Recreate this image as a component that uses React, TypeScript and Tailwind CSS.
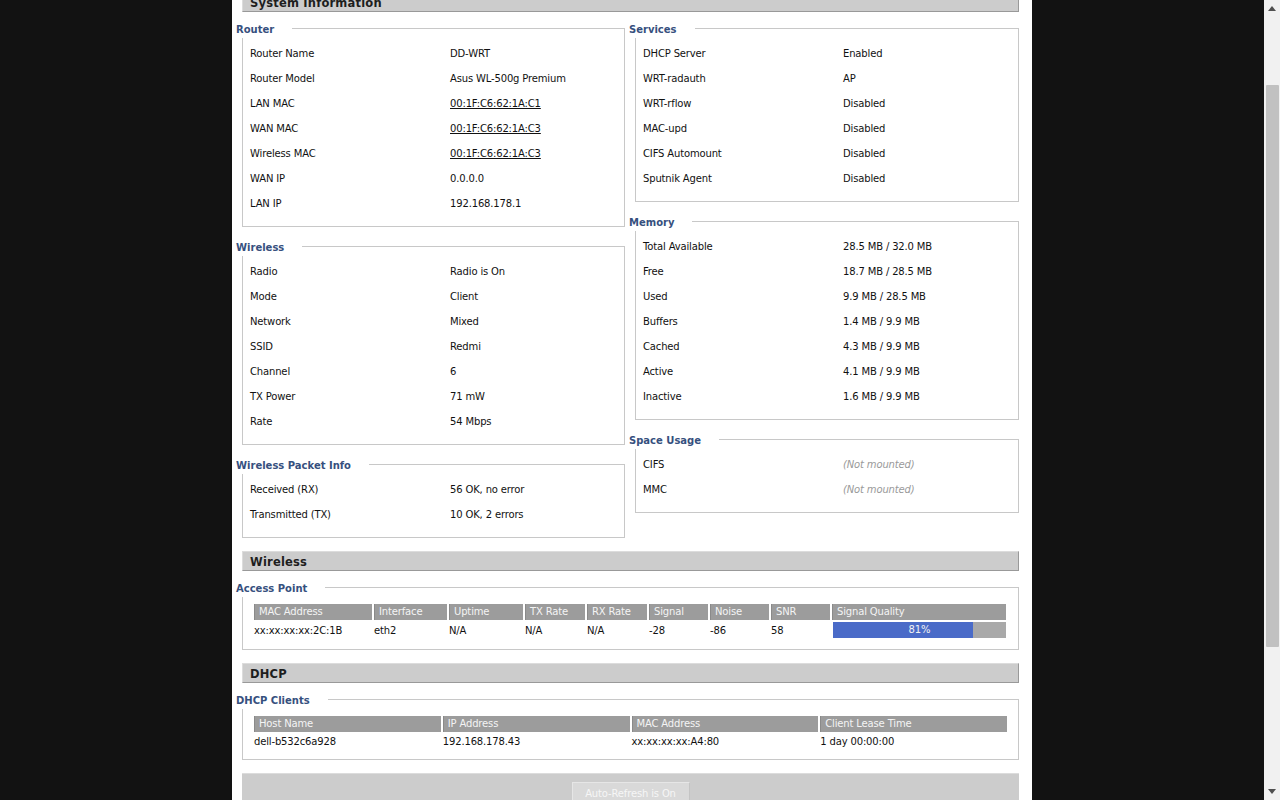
import React from "react";

type Row = [string, React.ReactNode];

function Legend({ children }: { children: React.ReactNode }) {
  return (
    <span className="absolute left-[-7px] top-[-7px] bg-white pr-[18px] text-[10px] font-bold leading-[16px] tracking-[0px] text-[#36507e]">
      {children}
    </span>
  );
}

function Box({
  legend,
  rows,
  className,
}: {
  legend: string;
  rows: Row[];
  className?: string;
}) {
  return (
    <div className={`relative border border-[#c8c8c8] pt-[12px] pb-[10px] ${className ?? ""}`}>
      <Legend>{legend}</Legend>
      {rows.map(([label, value], i) => (
        <div key={i} className="flex h-[25px] items-center pl-[7px]">
          <div className="w-[200px] shrink-0">{label}</div>
          <div>{value}</div>
        </div>
      ))}
    </div>
  );
}

function SectionBar({ title, className }: { title: string; className?: string }) {
  return (
    <div
      className={`flex h-[20px] items-center border-t border-l border-t-[#dcdcdc] border-l-[#dcdcdc] border-b border-r border-b-[#999] border-r-[#999] bg-[#cccccc] pl-[7px] pt-[3px] font-['DejaVu_Sans',sans-serif] text-[11.5px] font-bold tracking-[0.2px] text-[#1e1e1e] ${className ?? ""}`}
    >
      {title}
    </div>
  );
}

const mac = (s: string) => <span className="underline">{s}</span>;
const nm = <span className="italic text-[#9a9a9a]">(Not mounted)</span>;

function HeadCell({ children }: { children: React.ReactNode }) {
  return (
    <div className="h-[16px] overflow-hidden whitespace-nowrap border-l border-[#8a8a8a] bg-[#9c9c9c] pl-[4px] leading-[16px] text-[#f4f4f4]">
      {children}
    </div>
  );
}

function DataCell({ children }: { children: React.ReactNode }) {
  return <div className="h-[16px] whitespace-nowrap pt-[1px] leading-[16px]">{children}</div>;
}

export default function App() {
  const quality = 81;
  return (
    <div className="flex h-[800px] w-[1280px] overflow-hidden bg-[#121212] font-['DejaVu_Sans',sans-serif] text-[10px] tracking-[-0.15px] text-[#111]">
      <div className="flex h-[800px] flex-1 justify-center overflow-hidden">
        <div className="mt-[-8px] min-h-[840px] w-[800px] shrink-0 bg-white pl-[10px] pr-[13px]">
          <SectionBar title="System Information" />
          <div className="mt-[16px] flex gap-[10px]">
            <div className="flex w-[383px] flex-col gap-[19px]">
              <Box
                legend="Router"
                rows={[
                  ["Router Name", "DD-WRT"],
                  ["Router Model", "Asus WL-500g Premium"],
                  ["LAN MAC", mac("00:1F:C6:62:1A:C1")],
                  ["WAN MAC", mac("00:1F:C6:62:1A:C3")],
                  ["Wireless MAC", mac("00:1F:C6:62:1A:C3")],
                  ["WAN IP", "0.0.0.0"],
                  ["LAN IP", "192.168.178.1"],
                ]}
              />
              <Box
                legend="Wireless"
                rows={[
                  ["Radio", "Radio is On"],
                  ["Mode", "Client"],
                  ["Network", "Mixed"],
                  ["SSID", "Redmi"],
                  ["Channel", "6"],
                  ["TX Power", "71 mW"],
                  ["Rate", "54 Mbps"],
                ]}
              />
              <Box
                legend="Wireless Packet Info"
                rows={[
                  ["Received (RX)", "56 OK, no error"],
                  ["Transmitted (TX)", "10 OK, 2 errors"],
                ]}
              />
            </div>
            <div className="flex w-[384px] flex-col gap-[19px]">
              <Box
                legend="Services"
                rows={[
                  ["DHCP Server", "Enabled"],
                  ["WRT-radauth", "AP"],
                  ["WRT-rflow", "Disabled"],
                  ["MAC-upd", "Disabled"],
                  ["CIFS Automount", "Disabled"],
                  ["Sputnik Agent", "Disabled"],
                ]}
              />
              <Box
                legend="Memory"
                rows={[
                  ["Total Available", "28.5 MB / 32.0 MB"],
                  ["Free", "18.7 MB / 28.5 MB"],
                  ["Used", "9.9 MB / 28.5 MB"],
                  ["Buffers", "1.4 MB / 9.9 MB"],
                  ["Cached", "4.3 MB / 9.9 MB"],
                  ["Active", "4.1 MB / 9.9 MB"],
                  ["Inactive", "1.6 MB / 9.9 MB"],
                ]}
              />
              <Box
                legend="Space Usage"
                rows={[
                  ["CIFS", nm],
                  ["MMC", nm],
                ]}
              />
            </div>
          </div>

          <SectionBar title="Wireless" className="mt-[13px]" />
          <div className="relative mt-[16px] border border-[#c8c8c8] px-[11px] pt-[16px] pb-[11px]">
            <Legend>Access Point</Legend>
            <div className="grid grid-cols-[118px_73px_74px_60px_60px_59px_59px_59px_174px] gap-x-[2px] gap-y-[2px]">
              <HeadCell>MAC Address</HeadCell>
              <HeadCell>Interface</HeadCell>
              <HeadCell>Uptime</HeadCell>
              <HeadCell>TX Rate</HeadCell>
              <HeadCell>RX Rate</HeadCell>
              <HeadCell>Signal</HeadCell>
              <HeadCell>Noise</HeadCell>
              <HeadCell>SNR</HeadCell>
              <HeadCell>Signal Quality</HeadCell>
              <DataCell>xx:xx:xx:xx:2C:1B</DataCell>
              <DataCell>eth2</DataCell>
              <DataCell>N/A</DataCell>
              <DataCell>N/A</DataCell>
              <DataCell>N/A</DataCell>
              <DataCell>-28</DataCell>
              <DataCell>-86</DataCell>
              <DataCell>58</DataCell>
              <div className="relative ml-px h-[16px] bg-[#a9a9a9]">
                <div className="h-full bg-[#4a6bc8]" style={{ width: `${quality}%` }} />
                <span className="absolute inset-0 text-center leading-[16px] text-[#f2f2f2]">{quality}%</span>
              </div>
            </div>
          </div>

          <SectionBar title="DHCP" className="mt-[13px]" />
          <div className="relative mt-[16px] border border-[#c8c8c8] px-[11px] pt-[16px] pb-[10px]">
            <Legend>DHCP Clients</Legend>
            <div className="grid grid-cols-4 gap-x-[2px] gap-y-[1px]">
              <HeadCell>Host Name</HeadCell>
              <HeadCell>IP Address</HeadCell>
              <HeadCell>MAC Address</HeadCell>
              <HeadCell>Client Lease Time</HeadCell>
              <DataCell>dell-b532c6a928</DataCell>
              <DataCell>192.168.178.43</DataCell>
              <DataCell>xx:xx:xx:xx:A4:80</DataCell>
              <DataCell>1 day 00:00:00</DataCell>
            </div>
          </div>

          <div className="mt-[13px] flex h-[60px] justify-center border-t border-[#dcdcdc] bg-[#cccccc] pt-[8px]">
            <div className="flex h-[22px] w-[118px] items-center justify-center border border-t-[#e6e6e6] border-l-[#e6e6e6] border-r-[#c4c4c4] border-b-[#c4c4c4] bg-[#d9d9d9] text-[#f6f6f6]">
              Auto-Refresh is On
            </div>
          </div>
        </div>
      </div>

      <div className="flex h-[800px] w-[16px] shrink-0 flex-col items-center bg-[#f1f1f1]">
        <div className="flex h-[17px] w-full items-center justify-center">
          <svg width="8" height="5" viewBox="0 0 8 5">
            <path d="M0 5 L4 0 L8 5 Z" fill="#505050" />
          </svg>
        </div>
        <div className="mt-[68px] h-[562px] w-[13px] rounded-[1px] bg-[#c1c1c1]" />
        <div className="flex-1" />
        <div className="flex h-[17px] w-full items-center justify-center">
          <svg width="8" height="5" viewBox="0 0 8 5">
            <path d="M0 0 L8 0 L4 5 Z" fill="#505050" />
          </svg>
        </div>
      </div>
    </div>
  );
}
